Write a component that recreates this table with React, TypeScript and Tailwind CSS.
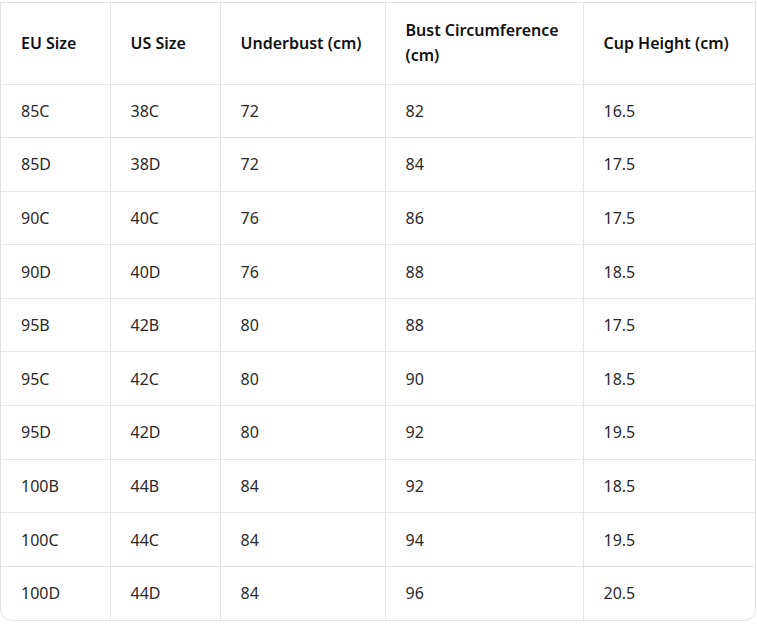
import React from "react";

const headers = ["EU Size", "US Size", "Underbust (cm)", "Bust Circumference (cm)", "Cup Height (cm)"];
const rows = [
  ["85C", "38C", "72", "82", "16.5"],
  ["85D", "38D", "72", "84", "17.5"],
  ["90C", "40C", "76", "86", "17.5"],
  ["90D", "40D", "76", "88", "18.5"],
  ["95B", "42B", "80", "88", "17.5"],
  ["95C", "42C", "80", "90", "18.5"],
  ["95D", "42D", "80", "92", "19.5"],
  ["100B", "44B", "84", "92", "18.5"],
  ["100C", "44C", "84", "94", "19.5"],
  ["100D", "44D", "84", "96", "20.5"],
];

export default function App() {
  return (
    <div className="w-[757px] h-[633px] bg-white pt-[2px]" style={{ fontFamily: '"Noto Sans", "Open Sans", sans-serif' }}>
      <div className="w-[756px] border border-[#e3e3e3] rounded-b-xl overflow-hidden">
        <table className="w-full table-fixed border-collapse">
          <colgroup>
            <col className="w-[109px]" />
            <col className="w-[110px]" />
            <col className="w-[165px]" />
            <col className="w-[198px]" />
            <col />
          </colgroup>
          <thead>
            <tr className="h-[81px]">
              {headers.map((h, i) => (
                <th
                  key={h}
                  className={`text-left align-middle px-5 text-[16px] leading-[25px] font-semibold text-[#111] border-b border-[#e6e6e6] ${i > 0 ? "border-l" : ""}`}
                >
                  {h}
                </th>
              ))}
            </tr>
          </thead>
          <tbody>
            {rows.map((r, ri) => (
              <tr key={ri} className="h-[53.6px]">
                {r.map((c, i) => (
                  <td
                    key={i}
                    className={`px-5 text-[16px] text-[#2a2a2a] align-middle border-[#e6e6e6] ${ri < rows.length - 1 ? "border-b" : ""} ${i > 0 ? "border-l" : ""}`}
                  >
                    {c}
                  </td>
                ))}
              </tr>
            ))}
          </tbody>
        </table>
      </div>
    </div>
  );
}
